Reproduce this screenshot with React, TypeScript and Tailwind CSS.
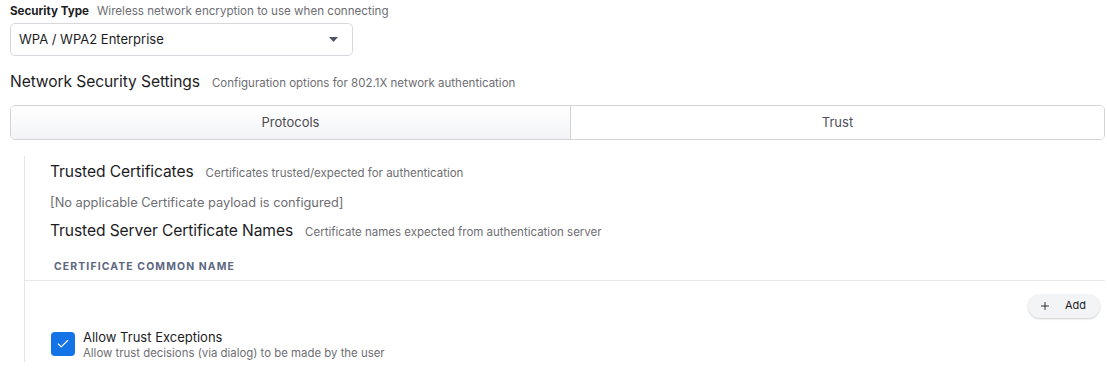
import { Check, Plus } from "lucide-react";

const FONT = "font-['Inter','Noto_Sans',sans-serif]";

function SectionTitle({ title, hint }: { title: string; hint: string }) {
  return (
    <div className="flex items-baseline gap-[12px]">
      <span className="text-[15.6px] tracking-[-0.1px] text-[#1d1d1f]">{title}</span>
      <span className="text-[11.5px] text-[#6e6e73]">{hint}</span>
    </div>
  );
}

export default function App() {
  return (
    <div className={`${FONT} w-[1107px] h-[379px] bg-white overflow-hidden pl-[10px] pr-[2px]`}>
      {/* Security type */}
      <div className="flex items-baseline gap-[8px] pt-[3px] h-[22px]">
        <span className="text-[11.6px] font-bold text-[#1d1d1f]">Security Type</span>
        <span className="text-[11.6px] text-[#6e6e73]">Wireless network encryption to use when connecting</span>
      </div>
      <div className="mt-[1px] w-[343px] h-[33px] border border-[#d8d8dc] rounded-[5px] flex items-center justify-between pl-[8px] pr-[14px]">
        <span className="text-[13px] text-[#1d1d1f]">WPA / WPA2 Enterprise</span>
        <svg width="9" height="5" viewBox="0 0 9 5">
          <path d="M0 0h9L4.5 5z" fill="#4b5563" />
        </svg>
      </div>

      {/* Network security settings */}
      <div className="mt-[14px] h-[20px]">
        <SectionTitle title="Network Security Settings" hint="Configuration options for 802.1X network authentication" />
      </div>
      <div className="mt-[15px] flex h-[35px] border border-[#d4d4d8] rounded-[5px] overflow-hidden">
        <div className="w-[560px] flex items-center justify-center bg-gradient-to-b from-white to-[#f3f4f6] border-r border-[#d4d4d8] text-[13px] text-[#4b4b50]">
          Protocols
        </div>
        <div className="flex-1 flex items-center justify-center bg-white text-[13px] text-[#4b5060]">Trust</div>
      </div>

      {/* Trust tab content */}
      <div className="ml-[14px] mt-[16px] border-l border-[#e5e5e5] h-[206px]">
        <div className="pl-[25px] pt-[4px]">
          <SectionTitle title="Trusted Certificates" hint="Certificates trusted/expected for authentication" />
          <div className="mt-[10px] text-[12.8px] text-[#6e6e73]">[No applicable Certificate payload is configured]</div>
          <div className="mt-[6px]">
            <SectionTitle title="Trusted Server Certificate Names" hint="Certificate names expected from authentication server" />
          </div>
        </div>
        <div className="mt-[17px] pl-[29px] pb-[5px] border-b border-[#e8e8ea] text-[10.4px] font-bold tracking-[0.11em] text-[#5c6780]">
          CERTIFICATE COMMON NAME
        </div>
        <div className="flex justify-end pr-[5px] mt-[13px]">
          <button className="flex items-center gap-[14px] h-[24px] pl-[11px] pr-[14px] rounded-full bg-[#f3f4f6] shadow-[0_1px_2px_rgba(0,0,0,0.2)] text-[11px] text-[#1d1d1f]">
            <Plus size={12} strokeWidth={1.8} />
            Add
          </button>
        </div>
        <div className="flex items-start gap-[8px] pl-[26px] mt-[14px]">
          <div className="w-[24px] h-[24px] rounded-[4px] bg-[#1473e6] flex items-center justify-center">
            <Check size={14} color="white" strokeWidth={2} />
          </div>
          <div className="leading-none">
            <div className="text-[13px] text-[#1d1d1f] mt-[-1px]">Allow Trust Exceptions</div>
            <div className="text-[11.4px] text-[#6e6e73] mt-[4px]">Allow trust decisions (via dialog) to be made by the user</div>
          </div>
        </div>
      </div>
    </div>
  );
}
